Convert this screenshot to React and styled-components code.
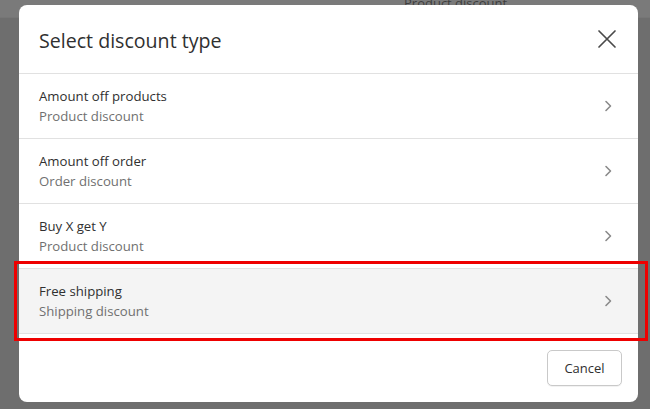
import React from 'react';
import styled, { createGlobalStyle } from 'styled-components';

const Global = createGlobalStyle`
  html, body {
    margin: 0;
    padding: 0;
    width: 650px;
    height: 409px;
    overflow: hidden;
    font-family: 'Open Sans', 'Liberation Sans', sans-serif;
  }
`;

const types = [
  { title: 'Amount off products', sub: 'Product discount' },
  { title: 'Amount off order', sub: 'Order discount' },
  { title: 'Buy X get Y', sub: 'Product discount' },
  { title: 'Free shipping', sub: 'Shipping discount', active: true },
];

const Chevron = () => (
  <svg width="16" height="16" viewBox="0 0 16 16" fill="none">
    <path d="M6 3.5l4.5 4.5L6 12.5" stroke="#8a8a8a" strokeWidth="1.6" strokeLinecap="round" strokeLinejoin="round" />
  </svg>
);

const CloseIcon = () => (
  <svg width="20" height="20" viewBox="0 0 20 20" fill="none">
    <path d="M2 2l16 16M18 2L2 18" stroke="#4a4a4a" strokeWidth="1.7" strokeLinecap="round" />
  </svg>
);

const App = () => (
  <Page>
    <Global />
    <Behind>
      <BehindText>Product discount</BehindText>
    </Behind>
    <Overlay>
      <Modal>
        <Header>
          <Title>Select discount type</Title>
          <CloseButton aria-label="Close">
            <CloseIcon />
          </CloseButton>
        </Header>
        <List>
          {types.map((t) => (
            <Row key={t.title} $active={t.active}>
              <RowText>
                <RowTitle>{t.title}</RowTitle>
                <RowSub>{t.sub}</RowSub>
              </RowText>
              <Chevron />
            </Row>
          ))}
        </List>
        <Footer>
          <Button>Cancel</Button>
        </Footer>
      </Modal>
      <Highlight />
    </Overlay>
  </Page>
);

const Page = styled.div`
  position: relative;
  width: 650px;
  height: 409px;
  background: #6e6e6e;
`;

const Behind = styled.div`
  height: 17px;
  background: #7a7a7a;
  border-bottom: 1px solid #767676;
  position: relative;
`;

const BehindText = styled.span`
  position: absolute;
  left: 404px;
  top: -6px;
  font-size: 13px;
  color: #3e3e3e;
`;

const Overlay = styled.div`
  position: absolute;
  inset: 0;
  padding: 5px 12px 0 19px;
`;

const Modal = styled.div`
  width: 619px;
  height: 397px;
  background: #fff;
  border-radius: 8px;
  overflow: hidden;
  display: flex;
  flex-direction: column;
`;

const Header = styled.div`
  height: 68px;
  display: flex;
  align-items: center;
  justify-content: space-between;
  padding: 0 20px 0 20px;
  border-bottom: 1px solid #e1e1e1;
`;

const Title = styled.h2`
  margin: 0;
  font-size: 19.6px;
  font-weight: 400;
  color: #303030;
  padding-top: 2px;
`;

const CloseButton = styled.button`
  border: 0;
  background: none;
  padding: 0;
  width: 20px;
  height: 20px;
  display: flex;
  cursor: pointer;
  margin-right: 1px;
`;

const List = styled.div`
  display: flex;
  flex-direction: column;
`;

const Row = styled.div`
  height: 64px;
  display: flex;
  align-items: center;
  justify-content: space-between;
  padding: 0 22px 0 20px;
  border-bottom: 1px solid #e1e1e1;
  background: ${(p) => (p.$active ? '#f4f4f4' : '#fff')};
  cursor: pointer;
`;

const RowText = styled.div`
  display: flex;
  flex-direction: column;
`;

const RowTitle = styled.span`
  font-size: 13.2px;
  line-height: 20px;
  color: #303030;
`;

const RowSub = styled.span`
  font-size: 13.2px;
  line-height: 20px;
  color: #707070;
`;

const Footer = styled.div`
  flex: 1;
  display: flex;
  align-items: center;
  justify-content: flex-end;
  padding: 0 16px 0 0;
`;

const Button = styled.button`
  height: 36px;
  width: 75px;
  border: 1px solid #c9c9c9;
  border-radius: 5px;
  background: #fff;
  font-family: 'Open Sans', 'Liberation Sans', sans-serif;
  font-size: 13px;
  color: #303030;
  box-shadow: 0 1px 0 rgba(0, 0, 0, 0.05);
`;

const Highlight = styled.div`
  position: absolute;
  left: 14px;
  top: 261px;
  width: 628px;
  height: 74px;
  border: 3px solid #ee0000;
  pointer-events: none;
`;

export default App;
